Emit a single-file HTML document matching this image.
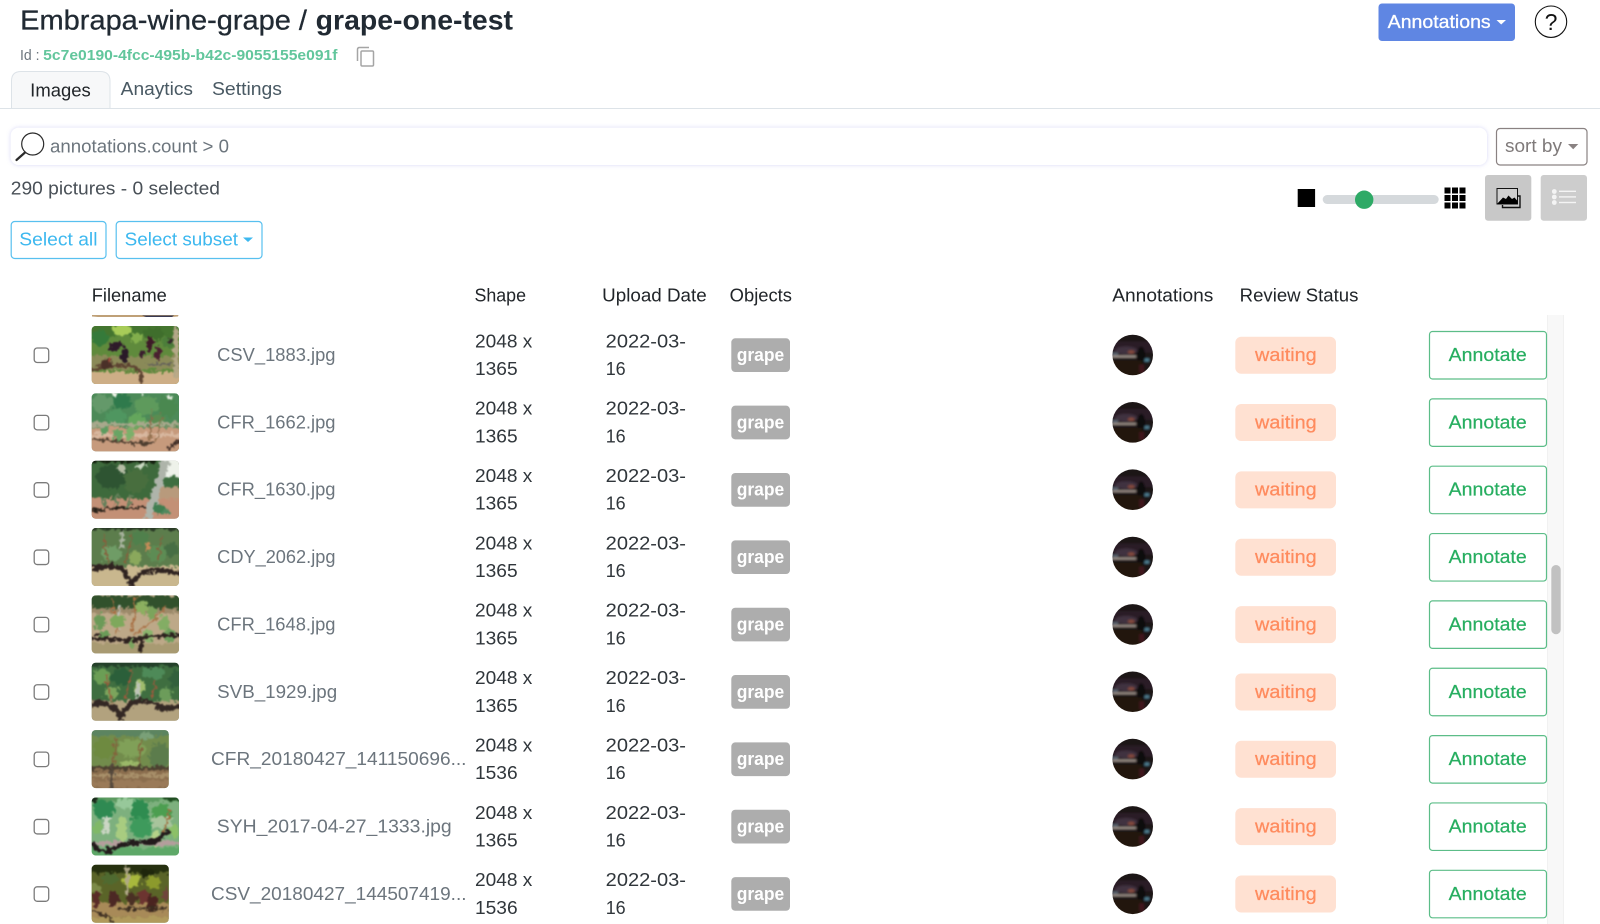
<!DOCTYPE html>
<html lang="en"><head><meta charset="utf-8"><title>grape-one-test</title>
<style>
html,body{margin:0;padding:0;background:#fff;width:1600px;height:924px;overflow:hidden}
svg{display:block;position:absolute;left:0;top:0}
text{font-family:"Liberation Sans",Arial,sans-serif;font-size:18px}
.t{fill:#212529}.n{fill:#6c757d}.b{fill:#30363b}
.g{fill:#fff;font-weight:700}.w{fill:#ff8b5e;stroke:#ff8b5e;stroke-width:.25}.a{fill:#27ae60;stroke:#27ae60;stroke-width:.2}
</style></head><body>
<svg width="1600" height="924" viewBox="0 0 1600 924" xmlns="http://www.w3.org/2000/svg" style="filter:blur(.3px)">
<defs>
<filter id="f" x="-5%" y="-5%" width="110%" height="110%" color-interpolation-filters="sRGB"><feTurbulence type="fractalNoise" baseFrequency=".22" numOctaves="3" seed="4" result="n"/><feDisplacementMap in="SourceGraphic" in2="n" scale="9" xChannelSelector="R" yChannelSelector="G"/><feGaussianBlur stdDeviation=".75"/></filter>
<filter id="fa" x="-10%" y="-10%" width="120%" height="120%"><feGaussianBlur stdDeviation="1"/></filter>
<filter id="sh" x="-2%" y="-30%" width="104%" height="160%"><feDropShadow dx="0" dy="0" stdDeviation="2" flood-color="#7d7de0" flood-opacity=".32"/></filter>
<clipPath id="c87"><rect x="0" y="0" width="87.3" height="58" rx="4"/></clipPath>
<clipPath id="c77"><rect x="0" y="0" width="77" height="58" rx="4"/></clipPath>
<clipPath id="ca"><circle cx="20.5" cy="20.5" r="20.3"/></clipPath>
<symbol id="av" width="41" height="41" viewBox="0 0 41 41" overflow="visible"><g clip-path="url(#ca)"><g filter="url(#fa)">
<rect x="-3" y="-3" width="47" height="47" fill="#1a1215"/>
<rect x="0" y="7" width="41" height="11" fill="#2a1f27"/>
<ellipse cx="14" cy="16" rx="11" ry="4" fill="#40323f"/>
<ellipse cx="19" cy="17.5" rx="3.5" ry="1.8" fill="#84483c"/>
<rect x="0" y="21" width="24" height="2" fill="#a0948c"/>
<rect x="0" y="18" width="6" height="3" fill="#56606c"/>
<rect x="31" y="24" width="6" height="3" fill="#4f7f92"/>
<ellipse cx="29" cy="21" rx="4" ry="9" fill="#0e0b0d"/>
<rect x="0" y="26" width="30" height="15" fill="#20170f"/>
<rect x="27" y="30" width="5" height="8" fill="#40181a"/>
</g></g></symbol>
<symbol id="t1" width="88" height="58" viewBox="0 0 88 58" overflow="visible"><g clip-path="url(#c87)"><rect width="88" height="58" fill="#5f8a3c"/><g filter="url(#f)">
<rect x="-6" y="-6" width="100" height="70" fill="#5f8a3c"/>
<rect x="-6" y="-6" width="100" height="16" fill="#44752f"/>
<ellipse cx="30" cy="4" rx="10" ry="6" fill="#a8cc58"/><ellipse cx="8" cy="12" rx="9" ry="8" fill="#357a3a"/><ellipse cx="62" cy="8" rx="10" ry="6" fill="#3f6e2c"/><ellipse cx="45" cy="12" rx="7" ry="5" fill="#82ae4c"/><ellipse cx="76" cy="16" rx="6" ry="6" fill="#4c7e3a"/>
<rect x="-6" y="30" width="100" height="14" fill="#8a8a58"/>
<rect x="-6" y="46" width="100" height="18" fill="#cdae86"/>
<path d="M-2 44C18 40 30 37 44 42C50 46 50 52 49 58" stroke="#5e4432" stroke-width="4" fill="none"/>
<path d="M54 38H82" stroke="#63605a" stroke-width="2" fill="none"/>
<ellipse cx="24" cy="20" rx="8" ry="4" fill="#2e1a2a"/><ellipse cx="33" cy="30" rx="4" ry="7" fill="#2a1a28"/><ellipse cx="58" cy="18" rx="3.6" ry="7" fill="#3e1a28"/><ellipse cx="50" cy="28" rx="3" ry="5.5" fill="#3a1c2e"/><ellipse cx="66" cy="28" rx="3.5" ry="8" fill="#4a2030"/><ellipse cx="15" cy="38" rx="5" ry="6" fill="#4a3028"/><ellipse cx="17" cy="34" rx="2" ry="3" fill="#a84c3c"/><ellipse cx="79" cy="14" rx="2" ry="4" fill="#35282c"/>
<rect x="82" y="0" width="5" height="52" fill="#b4a888"/>
</g></g></symbol>
<symbol id="t2" width="88" height="58" viewBox="0 0 88 58" overflow="visible"><g clip-path="url(#c87)"><rect width="88" height="58" fill="#6e8f6a"/><g filter="url(#f)">
<rect x="-6" y="-6" width="100" height="42" fill="#4c8a58"/>
<rect x="-6" y="34" width="100" height="30" fill="#c69a7c"/>
<ellipse cx="10" cy="10" rx="11" ry="9" fill="#64996a"/><ellipse cx="30" cy="8" rx="9" ry="8" fill="#2f7a4c"/><ellipse cx="55" cy="12" rx="12" ry="9" fill="#5e9a5c"/><ellipse cx="76" cy="14" rx="10" ry="10" fill="#4a8850"/><ellipse cx="24" cy="24" rx="10" ry="8" fill="#4f9660"/><ellipse cx="46" cy="28" rx="9" ry="8" fill="#64a65c"/><ellipse cx="66" cy="28" rx="7" ry="7" fill="#5a8c50"/>
<circle cx="78" cy="4" r="3" fill="#e8efe2"/><circle cx="22" cy="1" r="2" fill="#eef3e8"/><circle cx="50" cy="1" r="1.6" fill="#dfe8d8"/>
<rect x="-6" y="29" width="100" height="4" fill="#a8a88c"/>
<rect x="-6" y="40" width="100" height="4" fill="#d8b8a0"/>
<path d="M0 46C20 47 40 50 62 50" stroke="#4e3e30" stroke-width="2.5" fill="none"/>
<path d="M76 56C80 52 84 50 88 48" stroke="#3e2c26" stroke-width="3" fill="none"/>
<ellipse cx="26" cy="42" rx="5" ry="6" fill="#69a464"/><ellipse cx="38" cy="40" rx="5" ry="6" fill="#7cb06a"/><ellipse cx="12" cy="37" rx="3" ry="4" fill="#5d9c60"/><path d="M60 18L58 46M70 22L64 48" stroke="#8c6a48" stroke-width="1.4" fill="none"/>
</g></g></symbol>
<symbol id="t3" width="88" height="58" viewBox="0 0 88 58" overflow="visible"><g clip-path="url(#c87)"><rect width="88" height="58" fill="#5c6a4c"/><g filter="url(#f)">
<rect x="-6" y="-6" width="100" height="44" fill="#3e6a3c"/>
<rect x="-6" y="-6" width="70" height="8" fill="#14200f"/>
<rect x="70" y="-6" width="24" height="23" fill="#eef2ea"/>
<rect x="68" y="16" width="26" height="10" fill="#3e6e40"/>
<rect x="64" y="26" width="30" height="16" fill="#b89a7c"/>
<rect x="-6" y="38" width="100" height="26" fill="#c39076"/>
<ellipse cx="20" cy="16" rx="16" ry="12" fill="#2e5432"/><ellipse cx="44" cy="20" rx="12" ry="12" fill="#486e3e"/><ellipse cx="30" cy="8" rx="4" ry="5" fill="#b4bca4"/><ellipse cx="50" cy="5" rx="5" ry="3" fill="#c8d8c0"/>
<path d="M10 36L14 46M26 34L24 46M40 34L36 46" stroke="#64805a" stroke-width="3" fill="none"/>
<path d="M0 50C20 47 40 46 66 47" stroke="#241e16" stroke-width="2" fill="none"/>
<path d="M74 0L56 58" stroke="#aeb4aa" stroke-width="8" fill="none"/>
<ellipse cx="66" cy="48" rx="7" ry="5" fill="#3f7e50"/><ellipse cx="74" cy="51" rx="4" ry="3" fill="#50895e"/>
</g></g></symbol>
<symbol id="t4" width="88" height="58" viewBox="0 0 88 58" overflow="visible"><g clip-path="url(#c87)"><rect width="88" height="58" fill="#7c8a62"/><g filter="url(#f)">
<rect x="-6" y="-6" width="100" height="70" fill="#c9b78e"/>
<rect x="-6" y="-6" width="100" height="44" fill="#5c7d4c"/>
<rect x="-6" y="-6" width="100" height="8" fill="#2a3a26"/>
<ellipse cx="20" cy="26" rx="10" ry="8" fill="#6f9c66"/><ellipse cx="44" cy="30" rx="6" ry="7" fill="#8aa85c"/><ellipse cx="66" cy="26" rx="9" ry="9" fill="#5d8c54"/><ellipse cx="80" cy="22" rx="7" ry="7" fill="#476e44"/><ellipse cx="48" cy="10" rx="10" ry="7" fill="#50804c"/><rect x="54" y="14" width="4" height="9" fill="#c88c58"/><rect x="29" y="2" width="3" height="18" fill="#aab4a0"/><path d="M12 6L16 38M40 6L34 34M70 8L66 34" stroke="#875f3c" stroke-width="1.6" fill="none"/>
<path d="M0 40C12 38 26 38 32 42C36 48 38 52 39 58M39 58C44 46 54 42 64 42C72 42 80 44 88 46" stroke="#2f2320" stroke-width="5" fill="none"/>
</g></g></symbol>
<symbol id="t5" width="88" height="58" viewBox="0 0 88 58" overflow="visible"><g clip-path="url(#c87)"><rect width="88" height="58" fill="#8c9670"/><g filter="url(#f)">
<rect x="-6" y="-6" width="100" height="70" fill="#bda888"/>
<rect x="-6" y="0" width="100" height="13" fill="#31512c"/>
<rect x="-6" y="13" width="100" height="5" fill="#9c8a6a"/>
<rect x="-6" y="48" width="100" height="16" fill="#a89a72"/>
<rect x="26" y="10" width="3" height="24" fill="#bcc0b8"/>
<path d="M20 4L26 38M44 2L40 38M74 10C66 24 50 34 42 40" stroke="#a86e42" stroke-width="1.6" fill="none"/>
<ellipse cx="26" cy="26" rx="7" ry="7" fill="#7ea85c"/><ellipse cx="8" cy="26" rx="6" ry="8" fill="#6c9a58"/><ellipse cx="50" cy="12" rx="6" ry="6" fill="#8cb060"/><ellipse cx="60" cy="18" rx="5" ry="6" fill="#7ca45c"/><ellipse cx="72" cy="28" rx="6" ry="7" fill="#83ad64"/><ellipse cx="78" cy="40" rx="6" ry="7" fill="#6ea05c"/><ellipse cx="56" cy="40" rx="6" ry="6" fill="#8ab46c"/><ellipse cx="12" cy="39" rx="5" ry="4" fill="#6a9c58"/>
<path d="M0 42C20 44 36 46 44 44C52 42 70 40 88 40" stroke="#2d211e" stroke-width="4" fill="none"/>
<path d="M50 44L48 58" stroke="#2d211e" stroke-width="4" fill="none"/>
<ellipse cx="40" cy="49" rx="3" ry="4" fill="#7aa35e"/>
</g></g></symbol>
<symbol id="t6" width="88" height="58" viewBox="0 0 88 58" overflow="visible"><g clip-path="url(#c87)"><rect width="88" height="58" fill="#6a7f5a"/><g filter="url(#f)">
<rect x="-6" y="-6" width="100" height="70" fill="#b2a27e"/>
<rect x="-6" y="-6" width="100" height="44" fill="#3f6e40"/>
<rect x="-6" y="-6" width="100" height="10" fill="#24402a"/>
<ellipse cx="10" cy="14" rx="9" ry="8" fill="#6b9e55"/><ellipse cx="30" cy="14" rx="10" ry="9" fill="#2b5f3a"/><ellipse cx="62" cy="10" rx="11" ry="6" fill="#4e8a58"/><ellipse cx="84" cy="16" rx="7" ry="8" fill="#32603c"/><ellipse cx="48" cy="24" rx="6" ry="7" fill="#a0bc6c"/><rect x="44" y="20" width="4" height="16" fill="#bfc4b8"/><ellipse cx="20" cy="30" rx="7" ry="7" fill="#7ca45c"/><ellipse cx="74" cy="32" rx="6" ry="7" fill="#6c9c5a"/>
<path d="M14 12L20 40M40 6L34 36M64 16L60 36" stroke="#9a5a3c" stroke-width="1.6" fill="none"/>
<path d="M0 42C8 38 14 42 20 44C26 48 28 52 29 58M30 54C32 44 44 38 52 38C60 38 64 44 74 46C80 46 84 44 88 44" stroke="#332824" stroke-width="5" fill="none"/>
</g></g></symbol>
<symbol id="t7" width="78" height="58" viewBox="0 0 78 58" overflow="visible"><g clip-path="url(#c77)"><rect width="78" height="58" fill="#728c4c"/><g filter="url(#f)">
<rect x="-6" y="-6" width="90" height="70" fill="#728c4c"/>
<rect x="-6" y="-6" width="90" height="12" fill="#5c8460"/>
<ellipse cx="12" cy="18" rx="11" ry="11" fill="#6e8a40"/><ellipse cx="40" cy="18" rx="14" ry="9" fill="#80a058"/><ellipse cx="68" cy="26" rx="10" ry="14" fill="#5c7c4c"/><ellipse cx="38" cy="36" rx="9" ry="6" fill="#9ab868"/><ellipse cx="54" cy="6" rx="7" ry="4" fill="#7aa078"/><path d="M24 8L22 38M50 10L46 36" stroke="#82643c" stroke-width="2" fill="none"/>
<rect x="-6" y="38" width="90" height="26" fill="#8b6e4e"/>
<rect x="-6" y="36" width="90" height="4" fill="#4c4030"/>
<rect x="-6" y="44" width="90" height="3" fill="#a8906a"/><rect x="-6" y="50" width="90" height="8" fill="#9a7a58"/>
<path d="M20 36L20 58" stroke="#54483c" stroke-width="3" fill="none"/>
</g></g></symbol>
<symbol id="t8" width="88" height="58" viewBox="0 0 88 58" overflow="visible"><g clip-path="url(#c87)"><rect width="88" height="58" fill="#7db07e"/><g filter="url(#f)">
<rect x="-6" y="-6" width="100" height="70" fill="#7db07e"/>
<rect x="-6" y="-6" width="100" height="10" fill="#5c9a60"/>
<rect x="0" y="0" width="5" height="6" fill="#1a2a1a"/><rect x="72" y="-2" width="16" height="5" fill="#1f4c20"/>
<ellipse cx="12" cy="12" rx="11" ry="10" fill="#2f8a52"/><ellipse cx="36" cy="6" rx="12" ry="6" fill="#97c89a"/><ellipse cx="48" cy="16" rx="9" ry="14" fill="#2e8c50"/><ellipse cx="50" cy="30" rx="11" ry="10" fill="#3e9a5c"/><ellipse cx="70" cy="16" rx="10" ry="9" fill="#4c9e50"/><rect x="12" y="20" width="6" height="16" fill="#cbd6c4"/><rect x="60" y="20" width="20" height="10" fill="#a8c49c"/><ellipse cx="30" cy="32" rx="5" ry="13" fill="#a8cc80"/><ellipse cx="64" cy="42" rx="5" ry="8" fill="#b4d288"/><ellipse cx="6" cy="30" rx="5" ry="7" fill="#80b868"/><ellipse cx="82" cy="34" rx="6" ry="6" fill="#8cc068"/><path d="M78 10C76 24 74 30 70 38" stroke="#a06a3c" stroke-width="1.6" fill="none"/>
<rect x="-6" y="44" width="100" height="4" fill="#b49e9c"/>
<rect x="-6" y="50" width="100" height="14" fill="#5ea868"/>
<path d="M0 45C6 54 12 56 24 50C36 44 48 46 62 44C68 42 72 36 78 34" stroke="#231b1c" stroke-width="4.5" fill="none"/>
</g></g></symbol>
<symbol id="t9" width="78" height="58" viewBox="0 0 78 58" overflow="visible"><g clip-path="url(#c77)"><rect width="78" height="58" fill="#5a6428"/><g filter="url(#f)">
<rect x="-6" y="-6" width="90" height="70" fill="#5a6428"/>
<rect x="-6" y="-6" width="90" height="14" fill="#26300f"/>
<ellipse cx="40" cy="16" rx="9" ry="7" fill="#a8b83c"/><ellipse cx="62" cy="18" rx="8" ry="6" fill="#8c9a2c"/><ellipse cx="18" cy="14" rx="8" ry="6" fill="#4f6a30"/><ellipse cx="56" cy="8" rx="7" ry="4" fill="#1e260c"/><rect x="34" y="2" width="3" height="28" fill="#b0a888"/>
<rect x="-6" y="20" width="16" height="8" fill="#7c8a48"/>
<rect x="-6" y="38" width="90" height="14" fill="#a88a58"/>
<rect x="-6" y="52" width="90" height="12" fill="#b09a5c"/>
<ellipse cx="4" cy="34" rx="3.6" ry="9" fill="#5a2c28"/><ellipse cx="22" cy="34" rx="6" ry="8" fill="#4c2824"/><ellipse cx="40" cy="34" rx="5" ry="7" fill="#4a3024"/><ellipse cx="52" cy="32" rx="7" ry="7" fill="#6c3430"/><ellipse cx="60" cy="38" rx="5" ry="8" fill="#4a2420"/><ellipse cx="74" cy="30" rx="3" ry="6" fill="#70443c"/>
<path d="M0 46C10 50 18 50 22 58M24 44H77" stroke="#3a2c20" stroke-width="2" fill="none"/>
</g></g></symbol>
</defs>

<rect width="1600" height="924" fill="#fff"/>

<!-- header -->
<text x="20.2" y="29.5" style="font-size:28px" fill="#212a33" stroke="#212a33" stroke-width=".3" textLength="286.8" lengthAdjust="spacingAndGlyphs">Embrapa-wine-grape /</text>
<text x="315.7" y="29.5" style="font-size:28px;font-weight:700" fill="#212a33" textLength="197.3" lengthAdjust="spacingAndGlyphs">grape-one-test</text>
<text x="20" y="60" style="font-size:14.5px" fill="#6c757d" textLength="19.5" lengthAdjust="spacingAndGlyphs">Id :</text>
<text x="43.2" y="60" style="font-size:14.5px;font-weight:700" fill="#62c69c" textLength="294.3" lengthAdjust="spacingAndGlyphs">5c7e0190-4fcc-495b-b42c-9055155e091f</text>
<path d="M369 47.5H359.5Q357.5 47.5 357.5 49.5V61" fill="none" stroke="#a5a5a5" stroke-width="1.5"/>
<rect x="361" y="51" width="12.5" height="15" rx="1.2" fill="#fff" stroke="#a5a5a5" stroke-width="1.5"/>

<rect x="1378.5" y="3.5" width="136.5" height="37.5" rx="3.5" fill="#5f86e3"/>
<text x="1387.7" y="27.8" style="font-size:18.5px" fill="#fff" stroke="#fff" stroke-width=".3" textLength="103" lengthAdjust="spacingAndGlyphs">Annotations</text>
<path d="M1496.5 20H1506L1501.2 24.5Z" fill="#fff"/>
<circle cx="1551" cy="21.7" r="15.7" fill="#fff" stroke="#111" stroke-width="1.1"/>
<text x="1551" y="29.8" text-anchor="middle" style="font-size:23px" fill="#111">?</text>

<!-- tabs -->
<path d="M0 108.5H1600" stroke="#dde3e8" stroke-width="1"/>
<path d="M11.5 108.5V81Q11.5 71.5 21 71.5H100Q110 71.5 110 81V108.5Z" fill="#f7f8f9" stroke="#dde3e8"/>
<text x="30.2" y="96.5" class="t" textLength="60.6" lengthAdjust="spacingAndGlyphs">Images</text>
<text x="120.7" y="95" fill="#495963" textLength="72.3" lengthAdjust="spacingAndGlyphs">Anaytics</text>
<text x="212" y="95" fill="#495963" textLength="70" lengthAdjust="spacingAndGlyphs">Settings</text>

<!-- search -->
<rect x="10.7" y="127.7" width="1476.3" height="37.3" rx="8" fill="#fff" filter="url(#sh)"/>
<circle cx="32.7" cy="144" r="11" fill="none" stroke="#2b2b2b" stroke-width="1.2"/>
<path d="M25 152.5L16.5 160" stroke="#2b2b2b" stroke-width="2.2" stroke-linecap="round"/>
<text x="50" y="152.5" class="n" textLength="179" lengthAdjust="spacingAndGlyphs">annotations.count &gt; 0</text>
<rect x="1496.5" y="128.5" width="90.5" height="36.5" rx="3.5" fill="#fff" stroke="#8a8282" stroke-width="1.2"/>
<text x="1505" y="152" fill="#7f7a7a" textLength="57" lengthAdjust="spacingAndGlyphs">sort by</text>
<path d="M1568 144H1578.3L1573.2 149.3Z" fill="#8a8282"/>

<text x="10.8" y="194.5" fill="#495057" textLength="209.2" lengthAdjust="spacingAndGlyphs">290 pictures - 0 selected</text>

<!-- slider + view toggles -->
<rect x="1297.7" y="189" width="17.4" height="18" fill="#000"/>
<rect x="1322.7" y="195" width="116" height="9" rx="4.5" fill="#d5d9dc"/>
<circle cx="1364.2" cy="199.7" r="9.2" fill="#2eaa66"/>
<g fill="#000"><rect x="1444.5" y="187.5" width="6" height="6"/><rect x="1452" y="187.5" width="6" height="6"/><rect x="1459.5" y="187.5" width="6" height="6"/><rect x="1444.5" y="195" width="6" height="6"/><rect x="1452" y="195" width="6" height="6"/><rect x="1459.5" y="195" width="6" height="6"/><rect x="1444.5" y="202.5" width="6" height="6"/><rect x="1452" y="202.5" width="6" height="6"/><rect x="1459.5" y="202.5" width="6" height="6"/></g>
<rect x="1485" y="175" width="46.3" height="45.7" rx="3" fill="#c8c8c8"/>
<rect x="1540.7" y="175" width="46.3" height="45.7" rx="3" fill="#cdcdcd"/>
<rect x="1497" y="188.5" width="20.5" height="15.5" fill="#cfcfcf" stroke="#111" stroke-width="1"/>
<path d="M1497 204L1503 197.5L1506 199L1508.5 195.5L1512 199L1514.5 197.5L1517.5 201V204Z" fill="#000"/>
<path d="M1518 196H1520V207.5H1502.5V205" fill="none" stroke="#111" stroke-width="1.4"/>
<g fill="#f4f4f4"><circle cx="1554.3" cy="191.5" r="2.4"/><circle cx="1554.3" cy="197" r="2.4"/><circle cx="1554.3" cy="202.5" r="2.4"/><rect x="1559" y="190.6" width="17" height="1.4"/><rect x="1559" y="196.2" width="17" height="1.4"/><rect x="1559" y="201.8" width="17" height="1.4"/></g>

<!-- select buttons -->
<rect x="11.2" y="221.5" width="94.8" height="37" rx="3.5" fill="#fff" stroke="#58c0ef" stroke-width="1.2"/>
<text x="19.3" y="245.3" fill="#3db8ef" textLength="78.2" lengthAdjust="spacingAndGlyphs">Select all</text>
<rect x="116.2" y="221.5" width="145.8" height="37" rx="3.5" fill="#fff" stroke="#58c0ef" stroke-width="1.2"/>
<text x="124.6" y="245.3" fill="#3db8ef" textLength="113.4" lengthAdjust="spacingAndGlyphs">Select subset</text>
<path d="M243 237.5H253L248 242Z" fill="#3db8ef"/>

<!-- table header -->
<text x="91.8" y="301.5" class="t" textLength="75" lengthAdjust="spacingAndGlyphs">Filename</text>
<text x="474.5" y="301.5" class="t" textLength="51.5" lengthAdjust="spacingAndGlyphs">Shape</text>
<text x="602.2" y="301.5" class="t" textLength="104.5" lengthAdjust="spacingAndGlyphs">Upload Date</text>
<text x="729.7" y="301.5" class="t" textLength="62.3" lengthAdjust="spacingAndGlyphs">Objects</text>
<text x="1112.3" y="301.5" class="t" textLength="101" lengthAdjust="spacingAndGlyphs">Annotations</text>
<text x="1239.7" y="301.5" class="t" textLength="118.7" lengthAdjust="spacingAndGlyphs">Review Status</text>

<!-- scroll track -->
<rect x="1547.5" y="315" width="16" height="609" fill="#f8f8f8"/>
<path d="M1547.5 315V924M1563.5 315V924" stroke="#f1f1f1" stroke-width="1"/>
<rect x="1551.3" y="565" width="9.4" height="69.3" rx="4.7" fill="#c1c1c1"/>

<!-- partial row above -->
<path d="M92 315H178.5L178 316.5L172 317H98L92 316.5Z" fill="#bfa077"/>
<path d="M142 315.5H174L172 317H146Z" fill="#3a3a52"/>

<!-- row 1 -->
<g transform="translate(0,355)">
<rect x="34.2" y="-7" width="14.5" height="14.5" rx="3" fill="#fff" stroke="#7b7b7b" stroke-width="1.3"/>
<use href="#t1" x="91.7" y="-29"/>
<text x="217.2" y="6" class="n" textLength="118.3" lengthAdjust="spacingAndGlyphs">CSV_1883.jpg</text>
<text x="475" y="-7.7" class="b" textLength="57.3" lengthAdjust="spacingAndGlyphs">2048 x</text><text x="475" y="20" class="b" textLength="42.6" lengthAdjust="spacingAndGlyphs">1365</text>
<text x="605.7" y="-7.7" class="b" textLength="80.3" lengthAdjust="spacingAndGlyphs">2022-03-</text><text x="605.7" y="20" class="b" textLength="20" lengthAdjust="spacingAndGlyphs">16</text>
<rect x="731.3" y="-16.7" width="58.7" height="33.7" rx="4" fill="#adadad"/><text x="736.7" y="6" class="g" textLength="47.6" lengthAdjust="spacingAndGlyphs">grape</text>
<use href="#av" x="1112.2" y="-20.5"/>
<rect x="1235.3" y="-18.3" width="100.7" height="37" rx="6" fill="#ffe1d2"/><text x="1255" y="6" class="w" textLength="61.7" lengthAdjust="spacingAndGlyphs">waiting</text>
<rect x="1429.5" y="-23.5" width="117" height="47.5" rx="3" fill="#fff" stroke="#5cbd88" stroke-width="1.2"/><text x="1448.7" y="6" class="a" textLength="78" lengthAdjust="spacingAndGlyphs">Annotate</text>
</g>
<!-- row 2 -->
<g transform="translate(0,422.35)">
<rect x="34.2" y="-7" width="14.5" height="14.5" rx="3" fill="#fff" stroke="#7b7b7b" stroke-width="1.3"/>
<use href="#t2" x="91.7" y="-29"/>
<text x="217.2" y="6" class="n" textLength="118.3" lengthAdjust="spacingAndGlyphs">CFR_1662.jpg</text>
<text x="475" y="-7.7" class="b" textLength="57.3" lengthAdjust="spacingAndGlyphs">2048 x</text><text x="475" y="20" class="b" textLength="42.6" lengthAdjust="spacingAndGlyphs">1365</text>
<text x="605.7" y="-7.7" class="b" textLength="80.3" lengthAdjust="spacingAndGlyphs">2022-03-</text><text x="605.7" y="20" class="b" textLength="20" lengthAdjust="spacingAndGlyphs">16</text>
<rect x="731.3" y="-16.7" width="58.7" height="33.7" rx="4" fill="#adadad"/><text x="736.7" y="6" class="g" textLength="47.6" lengthAdjust="spacingAndGlyphs">grape</text>
<use href="#av" x="1112.2" y="-20.5"/>
<rect x="1235.3" y="-18.3" width="100.7" height="37" rx="6" fill="#ffe1d2"/><text x="1255" y="6" class="w" textLength="61.7" lengthAdjust="spacingAndGlyphs">waiting</text>
<rect x="1429.5" y="-23.5" width="117" height="47.5" rx="3" fill="#fff" stroke="#5cbd88" stroke-width="1.2"/><text x="1448.7" y="6" class="a" textLength="78" lengthAdjust="spacingAndGlyphs">Annotate</text>
</g>
<!-- row 3 -->
<g transform="translate(0,489.7)">
<rect x="34.2" y="-7" width="14.5" height="14.5" rx="3" fill="#fff" stroke="#7b7b7b" stroke-width="1.3"/>
<use href="#t3" x="91.7" y="-29"/>
<text x="217.2" y="6" class="n" textLength="118.3" lengthAdjust="spacingAndGlyphs">CFR_1630.jpg</text>
<text x="475" y="-7.7" class="b" textLength="57.3" lengthAdjust="spacingAndGlyphs">2048 x</text><text x="475" y="20" class="b" textLength="42.6" lengthAdjust="spacingAndGlyphs">1365</text>
<text x="605.7" y="-7.7" class="b" textLength="80.3" lengthAdjust="spacingAndGlyphs">2022-03-</text><text x="605.7" y="20" class="b" textLength="20" lengthAdjust="spacingAndGlyphs">16</text>
<rect x="731.3" y="-16.7" width="58.7" height="33.7" rx="4" fill="#adadad"/><text x="736.7" y="6" class="g" textLength="47.6" lengthAdjust="spacingAndGlyphs">grape</text>
<use href="#av" x="1112.2" y="-20.5"/>
<rect x="1235.3" y="-18.3" width="100.7" height="37" rx="6" fill="#ffe1d2"/><text x="1255" y="6" class="w" textLength="61.7" lengthAdjust="spacingAndGlyphs">waiting</text>
<rect x="1429.5" y="-23.5" width="117" height="47.5" rx="3" fill="#fff" stroke="#5cbd88" stroke-width="1.2"/><text x="1448.7" y="6" class="a" textLength="78" lengthAdjust="spacingAndGlyphs">Annotate</text>
</g>
<!-- row 4 -->
<g transform="translate(0,557.05)">
<rect x="34.2" y="-7" width="14.5" height="14.5" rx="3" fill="#fff" stroke="#7b7b7b" stroke-width="1.3"/>
<use href="#t4" x="91.7" y="-29"/>
<text x="217.2" y="6" class="n" textLength="118.3" lengthAdjust="spacingAndGlyphs">CDY_2062.jpg</text>
<text x="475" y="-7.7" class="b" textLength="57.3" lengthAdjust="spacingAndGlyphs">2048 x</text><text x="475" y="20" class="b" textLength="42.6" lengthAdjust="spacingAndGlyphs">1365</text>
<text x="605.7" y="-7.7" class="b" textLength="80.3" lengthAdjust="spacingAndGlyphs">2022-03-</text><text x="605.7" y="20" class="b" textLength="20" lengthAdjust="spacingAndGlyphs">16</text>
<rect x="731.3" y="-16.7" width="58.7" height="33.7" rx="4" fill="#adadad"/><text x="736.7" y="6" class="g" textLength="47.6" lengthAdjust="spacingAndGlyphs">grape</text>
<use href="#av" x="1112.2" y="-20.5"/>
<rect x="1235.3" y="-18.3" width="100.7" height="37" rx="6" fill="#ffe1d2"/><text x="1255" y="6" class="w" textLength="61.7" lengthAdjust="spacingAndGlyphs">waiting</text>
<rect x="1429.5" y="-23.5" width="117" height="47.5" rx="3" fill="#fff" stroke="#5cbd88" stroke-width="1.2"/><text x="1448.7" y="6" class="a" textLength="78" lengthAdjust="spacingAndGlyphs">Annotate</text>
</g>
<!-- row 5 -->
<g transform="translate(0,624.4)">
<rect x="34.2" y="-7" width="14.5" height="14.5" rx="3" fill="#fff" stroke="#7b7b7b" stroke-width="1.3"/>
<use href="#t5" x="91.7" y="-29"/>
<text x="217.2" y="6" class="n" textLength="118.3" lengthAdjust="spacingAndGlyphs">CFR_1648.jpg</text>
<text x="475" y="-7.7" class="b" textLength="57.3" lengthAdjust="spacingAndGlyphs">2048 x</text><text x="475" y="20" class="b" textLength="42.6" lengthAdjust="spacingAndGlyphs">1365</text>
<text x="605.7" y="-7.7" class="b" textLength="80.3" lengthAdjust="spacingAndGlyphs">2022-03-</text><text x="605.7" y="20" class="b" textLength="20" lengthAdjust="spacingAndGlyphs">16</text>
<rect x="731.3" y="-16.7" width="58.7" height="33.7" rx="4" fill="#adadad"/><text x="736.7" y="6" class="g" textLength="47.6" lengthAdjust="spacingAndGlyphs">grape</text>
<use href="#av" x="1112.2" y="-20.5"/>
<rect x="1235.3" y="-18.3" width="100.7" height="37" rx="6" fill="#ffe1d2"/><text x="1255" y="6" class="w" textLength="61.7" lengthAdjust="spacingAndGlyphs">waiting</text>
<rect x="1429.5" y="-23.5" width="117" height="47.5" rx="3" fill="#fff" stroke="#5cbd88" stroke-width="1.2"/><text x="1448.7" y="6" class="a" textLength="78" lengthAdjust="spacingAndGlyphs">Annotate</text>
</g>
<!-- row 6 -->
<g transform="translate(0,691.75)">
<rect x="34.2" y="-7" width="14.5" height="14.5" rx="3" fill="#fff" stroke="#7b7b7b" stroke-width="1.3"/>
<use href="#t6" x="91.7" y="-29"/>
<text x="217.2" y="6" class="n" textLength="120" lengthAdjust="spacingAndGlyphs">SVB_1929.jpg</text>
<text x="475" y="-7.7" class="b" textLength="57.3" lengthAdjust="spacingAndGlyphs">2048 x</text><text x="475" y="20" class="b" textLength="42.6" lengthAdjust="spacingAndGlyphs">1365</text>
<text x="605.7" y="-7.7" class="b" textLength="80.3" lengthAdjust="spacingAndGlyphs">2022-03-</text><text x="605.7" y="20" class="b" textLength="20" lengthAdjust="spacingAndGlyphs">16</text>
<rect x="731.3" y="-16.7" width="58.7" height="33.7" rx="4" fill="#adadad"/><text x="736.7" y="6" class="g" textLength="47.6" lengthAdjust="spacingAndGlyphs">grape</text>
<use href="#av" x="1112.2" y="-20.5"/>
<rect x="1235.3" y="-18.3" width="100.7" height="37" rx="6" fill="#ffe1d2"/><text x="1255" y="6" class="w" textLength="61.7" lengthAdjust="spacingAndGlyphs">waiting</text>
<rect x="1429.5" y="-23.5" width="117" height="47.5" rx="3" fill="#fff" stroke="#5cbd88" stroke-width="1.2"/><text x="1448.7" y="6" class="a" textLength="78" lengthAdjust="spacingAndGlyphs">Annotate</text>
</g>
<!-- row 7 -->
<g transform="translate(0,759.1)">
<rect x="34.2" y="-7" width="14.5" height="14.5" rx="3" fill="#fff" stroke="#7b7b7b" stroke-width="1.3"/>
<use href="#t7" x="91.7" y="-29"/>
<text x="211" y="6" class="n" textLength="255.5" lengthAdjust="spacingAndGlyphs">CFR_20180427_141150696...</text>
<text x="475" y="-7.7" class="b" textLength="57.3" lengthAdjust="spacingAndGlyphs">2048 x</text><text x="475" y="20" class="b" textLength="42.6" lengthAdjust="spacingAndGlyphs">1536</text>
<text x="605.7" y="-7.7" class="b" textLength="80.3" lengthAdjust="spacingAndGlyphs">2022-03-</text><text x="605.7" y="20" class="b" textLength="20" lengthAdjust="spacingAndGlyphs">16</text>
<rect x="731.3" y="-16.7" width="58.7" height="33.7" rx="4" fill="#adadad"/><text x="736.7" y="6" class="g" textLength="47.6" lengthAdjust="spacingAndGlyphs">grape</text>
<use href="#av" x="1112.2" y="-20.5"/>
<rect x="1235.3" y="-18.3" width="100.7" height="37" rx="6" fill="#ffe1d2"/><text x="1255" y="6" class="w" textLength="61.7" lengthAdjust="spacingAndGlyphs">waiting</text>
<rect x="1429.5" y="-23.5" width="117" height="47.5" rx="3" fill="#fff" stroke="#5cbd88" stroke-width="1.2"/><text x="1448.7" y="6" class="a" textLength="78" lengthAdjust="spacingAndGlyphs">Annotate</text>
</g>
<!-- row 8 -->
<g transform="translate(0,826.45)">
<rect x="34.2" y="-7" width="14.5" height="14.5" rx="3" fill="#fff" stroke="#7b7b7b" stroke-width="1.3"/>
<use href="#t8" x="91.7" y="-29"/>
<text x="216.8" y="6" class="n" textLength="234.9" lengthAdjust="spacingAndGlyphs">SYH_2017-04-27_1333.jpg</text>
<text x="475" y="-7.7" class="b" textLength="57.3" lengthAdjust="spacingAndGlyphs">2048 x</text><text x="475" y="20" class="b" textLength="42.6" lengthAdjust="spacingAndGlyphs">1365</text>
<text x="605.7" y="-7.7" class="b" textLength="80.3" lengthAdjust="spacingAndGlyphs">2022-03-</text><text x="605.7" y="20" class="b" textLength="20" lengthAdjust="spacingAndGlyphs">16</text>
<rect x="731.3" y="-16.7" width="58.7" height="33.7" rx="4" fill="#adadad"/><text x="736.7" y="6" class="g" textLength="47.6" lengthAdjust="spacingAndGlyphs">grape</text>
<use href="#av" x="1112.2" y="-20.5"/>
<rect x="1235.3" y="-18.3" width="100.7" height="37" rx="6" fill="#ffe1d2"/><text x="1255" y="6" class="w" textLength="61.7" lengthAdjust="spacingAndGlyphs">waiting</text>
<rect x="1429.5" y="-23.5" width="117" height="47.5" rx="3" fill="#fff" stroke="#5cbd88" stroke-width="1.2"/><text x="1448.7" y="6" class="a" textLength="78" lengthAdjust="spacingAndGlyphs">Annotate</text>
</g>
<!-- row 9 -->
<g transform="translate(0,893.8)">
<rect x="34.2" y="-7" width="14.5" height="14.5" rx="3" fill="#fff" stroke="#7b7b7b" stroke-width="1.3"/>
<use href="#t9" x="91.7" y="-29"/>
<text x="211" y="6" class="n" textLength="255.5" lengthAdjust="spacingAndGlyphs">CSV_20180427_144507419...</text>
<text x="475" y="-7.7" class="b" textLength="57.3" lengthAdjust="spacingAndGlyphs">2048 x</text><text x="475" y="20" class="b" textLength="42.6" lengthAdjust="spacingAndGlyphs">1536</text>
<text x="605.7" y="-7.7" class="b" textLength="80.3" lengthAdjust="spacingAndGlyphs">2022-03-</text><text x="605.7" y="20" class="b" textLength="20" lengthAdjust="spacingAndGlyphs">16</text>
<rect x="731.3" y="-16.7" width="58.7" height="33.7" rx="4" fill="#adadad"/><text x="736.7" y="6" class="g" textLength="47.6" lengthAdjust="spacingAndGlyphs">grape</text>
<use href="#av" x="1112.2" y="-20.5"/>
<rect x="1235.3" y="-18.3" width="100.7" height="37" rx="6" fill="#ffe1d2"/><text x="1255" y="6" class="w" textLength="61.7" lengthAdjust="spacingAndGlyphs">waiting</text>
<rect x="1429.5" y="-23.5" width="117" height="47.5" rx="3" fill="#fff" stroke="#5cbd88" stroke-width="1.2"/><text x="1448.7" y="6" class="a" textLength="78" lengthAdjust="spacingAndGlyphs">Annotate</text>
</g>
</svg>
</body></html>
